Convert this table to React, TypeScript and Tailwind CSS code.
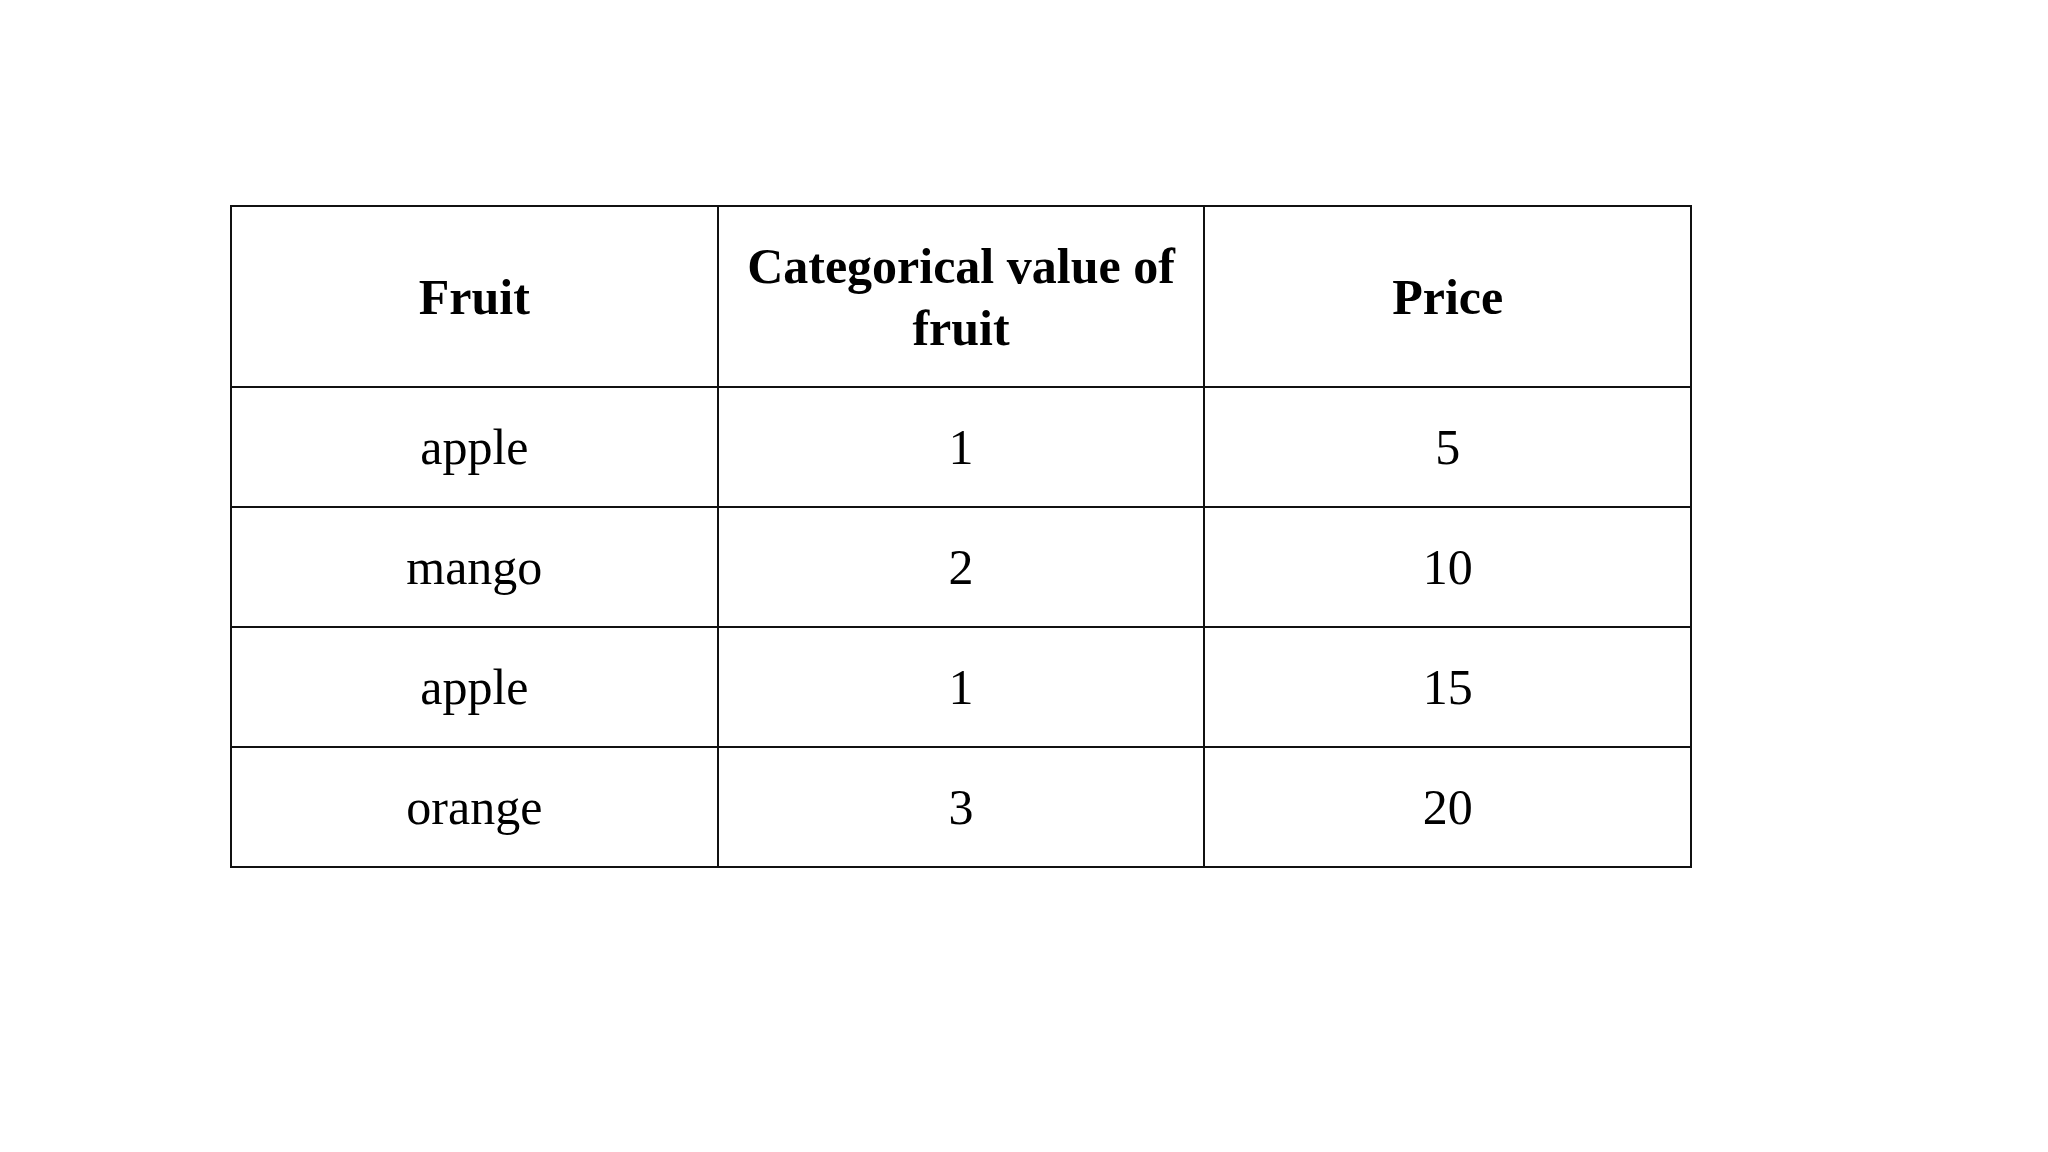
const rows = [
  { fruit: 'apple', code: '1', price: '5' },
  { fruit: 'mango', code: '2', price: '10' },
  { fruit: 'apple', code: '1', price: '15' },
  { fruit: 'orange', code: '3', price: '20' },
];

export default function App() {
  return (
    <div
      className="min-h-screen w-full bg-white pt-[205px] pl-[230px] text-black"
      style={{ fontFamily: '"Liberation Serif", "Times New Roman", serif' }}
    >
      <table className="w-[1462px] table-fixed border-collapse">
        <colgroup>
          <col className="w-1/3" />
          <col className="w-1/3" />
          <col className="w-1/3" />
        </colgroup>
        <thead>
          <tr className="h-[181px]">
            <th className="border-2 border-[#111] px-4 text-center align-middle text-[50px] font-bold leading-[62px]">
              Fruit
            </th>
            <th className="border-2 border-[#111] px-4 text-center align-middle text-[50px] font-bold leading-[62px]">
              Categorical value of
              <br />
              fruit
            </th>
            <th className="border-2 border-[#111] px-4 text-center align-middle text-[50px] font-bold leading-[62px]">
              Price
            </th>
          </tr>
        </thead>
        <tbody>
          {rows.map((r, i) => (
            <tr key={i} className="h-[120px]">
              <td className="border-2 border-[#111] text-center align-middle text-[50px] leading-none">
                {r.fruit}
              </td>
              <td className="border-2 border-[#111] text-center align-middle text-[50px] leading-none">
                {r.code}
              </td>
              <td className="border-2 border-[#111] text-center align-middle text-[50px] leading-none">
                {r.price}
              </td>
            </tr>
          ))}
        </tbody>
      </table>
    </div>
  );
}
